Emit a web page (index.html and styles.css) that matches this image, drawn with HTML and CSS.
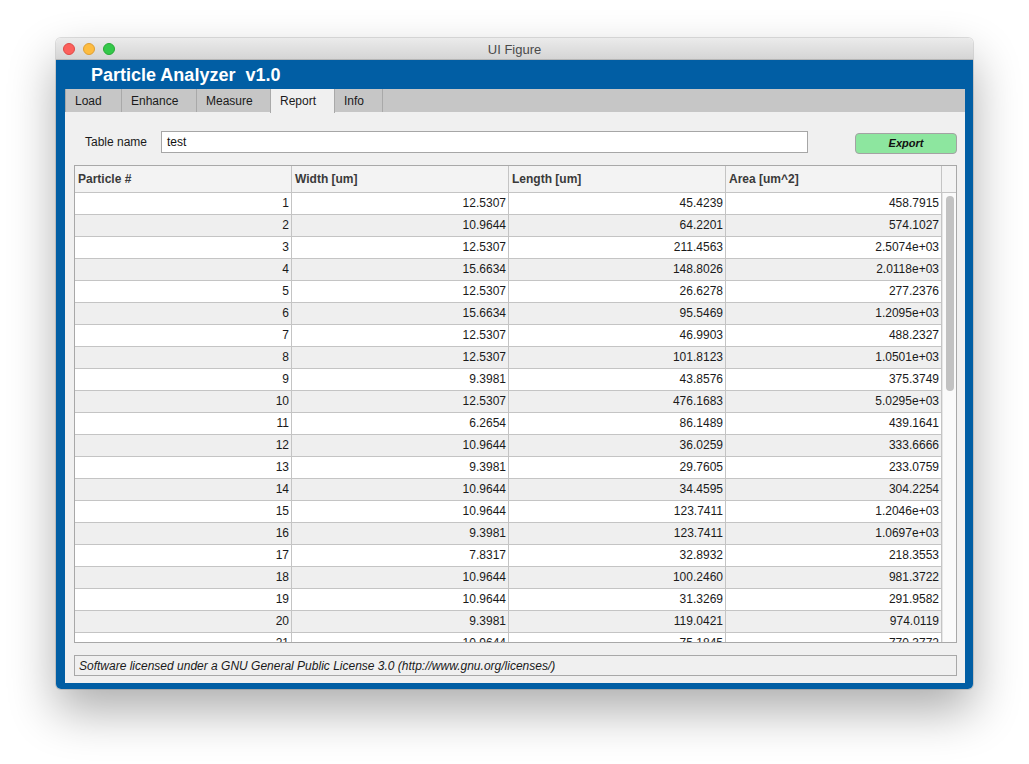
FILE: index.html
```html
<!DOCTYPE html>
<html>
<head>
<meta charset="utf-8">
<link rel="stylesheet" href="styles.css">
</head>
<body>
<div class="window">
  <div class="titlebar">
    <div class="lights">
      <span class="light red"></span>
      <span class="light yellow"></span>
      <span class="light green"></span>
    </div>
    <div class="wtitle">UI Figure</div>
  </div>
  <div class="frame">
    <div class="apptitle">Particle Analyzer&nbsp; v1.0</div>
    <div class="tabs">
      <div class="tab t-load">Load</div>
      <div class="tab t-enh">Enhance</div>
      <div class="tab t-meas">Measure</div>
      <div class="tab t-rep active">Report</div>
      <div class="tab t-info">Info</div>
    </div>
    <div class="panel">
      <div class="namerow">
        <label class="namelabel">Table name</label>
        <div class="nameinput">test</div>
        <div class="exportbtn">Export</div>
      </div>
      <div class="tablebox">
        <div class="thead">
          <div class="hc">Particle #</div>
          <div class="hc">Width [um]</div>
          <div class="hc">Length [um]</div>
          <div class="hc">Area [um^2]</div>
          <div class="hc hscroll"></div>
        </div>
        <div class="tbodywrap">
          <div class="rows" id="rows"></div>
          <div class="scrolltrack"><div class="thumb"></div></div>
        </div>
      </div>
      <div class="footer">Software licensed under a GNU General Public License 3.0 (http://www.gnu.org/licenses/)</div>
    </div>
  </div>
</div>
<script src="app.js"></script>
</body>
</html>
```
FILE: app.js
```js
const data = [
["1","12.5307","45.4239","458.7915"],
["2","10.9644","64.2201","574.1027"],
["3","12.5307","211.4563","2.5074e+03"],
["4","15.6634","148.8026","2.0118e+03"],
["5","12.5307","26.6278","277.2376"],
["6","15.6634","95.5469","1.2095e+03"],
["7","12.5307","46.9903","488.2327"],
["8","12.5307","101.8123","1.0501e+03"],
["9","9.3981","43.8576","375.3749"],
["10","12.5307","476.1683","5.0295e+03"],
["11","6.2654","86.1489","439.1641"],
["12","10.9644","36.0259","333.6666"],
["13","9.3981","29.7605","233.0759"],
["14","10.9644","34.4595","304.2254"],
["15","10.9644","123.7411","1.2046e+03"],
["16","9.3981","123.7411","1.0697e+03"],
["17","7.8317","32.8932","218.3553"],
["18","10.9644","100.2460","981.3722"],
["19","10.9644","31.3269","291.9582"],
["20","9.3981","119.0421","974.0119"],
["21","10.9644","75.1845","770.3772"]
];
const rows = document.getElementById('rows');
data.forEach((r, i) => {
  const row = document.createElement('div');
  row.className = 'row' + (i % 2 ? ' alt' : '');
  r.forEach(v => {
    const c = document.createElement('div');
    c.className = 'cell';
    c.textContent = v;
    row.appendChild(c);
  });
  rows.appendChild(row);
});
```
FILE: styles.css
```css
html, body {
  margin: 0;
  padding: 0;
  background: #ffffff;
}
body {
  min-height: 764px;
  box-sizing: border-box;
  padding: 38px 0 0 56px;
  font-family: "Liberation Sans", Arial, sans-serif;
}
.window {
  width: 917px;
  display: flex;
  flex-direction: column;
  border-radius: 5px;
  box-shadow: 0 22px 48px rgba(0,0,0,0.32), 0 0 0 1px rgba(0,0,0,0.12);
}
.titlebar {
  height: 22px;
  background: linear-gradient(#ebebeb, #d5d5d5);
  border-radius: 5px 5px 0 0;
  border-bottom: 1px solid #b5b5b5;
  box-sizing: border-box;
  display: flex;
  align-items: center;
  position: relative;
}
.lights {
  display: flex;
  gap: 8px;
  padding-left: 7px;
}
.light {
  width: 12px;
  height: 12px;
  border-radius: 50%;
  box-sizing: border-box;
}
.red { background: #fc605c; border: 1px solid #de4a46; }
.yellow { background: #fdbc40; border: 1px solid #de9f34; }
.green { background: #34c84a; border: 1px solid #27aa35; }
.wtitle {
  position: absolute;
  left: 0; right: 0; top: 1px;
  line-height: 22px;
  text-align: center;
  font-size: 13px;
  color: #4a4a4a;
}
.frame {
  background: #015ea4;
  padding: 0 8px 6px 9px;
  border-radius: 0 0 5px 5px;
  display: flex;
  flex-direction: column;
}
.apptitle {
  height: 29px;
  line-height: 31px;
  padding-left: 26px;
  color: #ffffff;
  font-weight: bold;
  font-size: 18px;
}
.tabs {
  height: 23px;
  background: #c6c6c6;
  display: flex;
  box-sizing: border-box;
  border-bottom: 1px solid #c6c6c6;
}
.tab {
  box-sizing: border-box;
  height: 23px;
  line-height: 25px;
  font-size: 12px;
  color: #1a1a1a;
  background: #c6c6c6;
  border-left: 1px solid #a9a9a9;
  border-right: 1px solid #a9a9a9;
  margin-right: -1px;
  padding-left: 9px;
}
.t-load { width: 57px; }
.t-enh { width: 76px; }
.t-meas { width: 75px; }
.t-rep { width: 65px; }
.t-info { width: 49px; }
.tab.active {
  background: #f0f0f0;
  height: 24px;
  position: relative;
  z-index: 1;
}
.panel {
  background: #f0f0f0;
  height: 571px;
  box-sizing: border-box;
  padding: 19px 8px 0 9px;
  display: flex;
  flex-direction: column;
}
.namerow {
  display: flex;
  align-items: center;
  height: 22px;
}
.namelabel {
  font-size: 12px;
  color: #1a1a1a;
  width: 87px;
  padding-left: 11px;
  box-sizing: border-box;
}
.nameinput {
  width: 647px;
  height: 22px;
  box-sizing: border-box;
  background: #ffffff;
  border: 1px solid #a6a6a6;
  font-size: 12px;
  line-height: 20px;
  padding-left: 5px;
  color: #111;
}
.exportbtn {
  margin-left: 47px;
  width: 102px;
  height: 21px;
  margin-top: 2px;
  box-sizing: border-box;
  background: #8de69f;
  border: 1px solid #a3a3a3;
  border-radius: 4px;
  text-align: center;
  font-size: 11px;
  font-weight: bold;
  font-style: italic;
  line-height: 18px;
  color: #111;
}
.tablebox {
  margin-top: 12px;
  height: 478px;
  box-sizing: border-box;
  border: 1px solid #a8a8a8;
  display: flex;
  flex-direction: column;
  overflow: hidden;
  background: #fafafa;
}
.thead {
  display: grid;
  grid-template-columns: 217px 217px 217px 216px 1fr;
  height: 27px;
  flex: none;
  background: #f3f3f3;
  border-bottom: 1px solid #c4c4c4;
  box-sizing: border-box;
}
.hc {
  font-size: 12px;
  font-weight: bold;
  color: #3a3a3a;
  line-height: 26px;
  padding-left: 3px;
  border-right: 1px solid #c4c4c4;
}
.hc.hscroll { border-right: none; }
.tbodywrap {
  display: flex;
  flex: 1;
  min-height: 0;
  overflow: hidden;
}
.rows {
  width: 867px;
  flex: none;
}
.row {
  display: grid;
  grid-template-columns: 217px 217px 217px 216px;
  height: 22px;
  box-sizing: border-box;
  border-bottom: 1px solid #c4c4c4;
  background: #ffffff;
}
.row.alt { background: #efefef; }
.cell {
  font-size: 12px;
  color: #1a1a1a;
  text-align: right;
  line-height: 21px;
  padding-right: 2px;
  border-right: 1px solid #c4c4c4;
}
.scrolltrack {
  flex: 1;
  background: #fafafa;
  border-left: 1px solid #e6e6e6;
  padding-top: 3px;
  display: flex;
  justify-content: center;
}
.thumb {
  width: 8px;
  height: 195px;
  border-radius: 4px;
  background: #c2c2c2;
}
.footer {
  margin-top: 12px;
  height: 21px;
  box-sizing: border-box;
  border: 1px solid #a8a8a8;
  font-size: 12px;
  font-style: italic;
  color: #1a1a1a;
  line-height: 20px;
  padding-left: 4px;
}
```
